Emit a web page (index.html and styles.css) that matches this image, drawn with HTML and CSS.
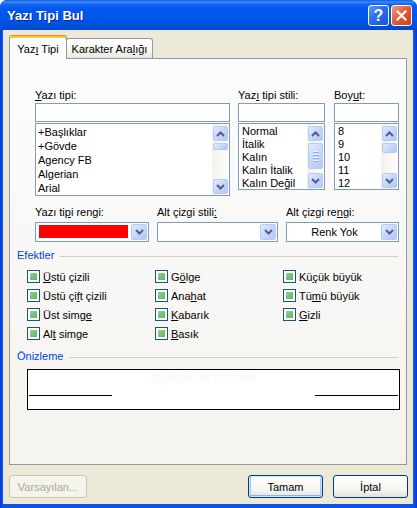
FILE: index.html
```html
<!DOCTYPE html>
<html lang="tr">
<head>
<meta charset="utf-8">
<title>Yazı Tipi Bul</title>
<link rel="stylesheet" href="styles.css">
</head>
<body>
<div class="window">
  <div class="titlebar">
    <span class="title">Yazı Tipi Bul</span>
    <div class="tb-buttons">
      <div class="tb-btn help">?</div>
      <div class="tb-btn close">
        <svg width="11" height="11" viewBox="0 0 11 11"><path d="M1.5 1.5 L9.5 9.5 M9.5 1.5 L1.5 9.5" stroke="#fff" stroke-width="2.2" stroke-linecap="square"/></svg>
      </div>
    </div>
  </div>
  <div class="client">
    <div class="tabs">
      <div class="tab active"><span>Yaz<u>ı</u> Tipi</span></div>
      <div class="tab inactive"><span>Karakter Ara<u>l</u>ığı</span></div>
    </div>
    <div class="panel">
      <div class="font-row">
        <div class="col col-font">
          <div class="lbl"><u>Y</u>azı tipi:</div>
          <div class="input"></div>
          <div class="list list-font">
            <div class="items">
              <div>+Başlıklar</div>
              <div>+Gövde</div>
              <div>Agency FB</div>
              <div>Algerian</div>
              <div>Arial</div>
            </div>
            <div class="vscroll">
              <div class="sb-btn"><svg width="9" height="6" viewBox="0 0 9 6"><path d="M1 5 L4.5 1.5 L8 5" fill="none" stroke="#4D6185" stroke-width="2"/></svg></div>
              <div class="sb-thumb thumb-font"></div>
              <div class="sb-track"></div>
              <div class="sb-btn"><svg width="9" height="6" viewBox="0 0 9 6"><path d="M1 1 L4.5 4.5 L8 1" fill="none" stroke="#4D6185" stroke-width="2"/></svg></div>
            </div>
          </div>
        </div>
        <div class="col col-style">
          <div class="lbl">Yaz<u>ı</u> tipi stili:</div>
          <div class="input"></div>
          <div class="list list-short">
            <div class="items">
              <div>Normal</div>
              <div>İtalik</div>
              <div>Kalın</div>
              <div>Kalın İtalik</div>
              <div>Kalın Değil</div>
            </div>
            <div class="vscroll">
              <div class="sb-btn"><svg width="9" height="6" viewBox="0 0 9 6"><path d="M1 5 L4.5 1.5 L8 5" fill="none" stroke="#4D6185" stroke-width="2"/></svg></div>
              <div class="sb-thumb thumb-style"><span></span><span></span><span></span><span></span></div>
              <div class="sb-track"></div>
              <div class="sb-btn"><svg width="9" height="6" viewBox="0 0 9 6"><path d="M1 1 L4.5 4.5 L8 1" fill="none" stroke="#4D6185" stroke-width="2"/></svg></div>
            </div>
          </div>
        </div>
        <div class="col col-size">
          <div class="lbl">Boy<u>u</u>t:</div>
          <div class="input"></div>
          <div class="list list-short">
            <div class="items">
              <div>8</div>
              <div>9</div>
              <div>10</div>
              <div>11</div>
              <div>12</div>
            </div>
            <div class="vscroll">
              <div class="sb-btn"><svg width="9" height="6" viewBox="0 0 9 6"><path d="M1 5 L4.5 1.5 L8 5" fill="none" stroke="#4D6185" stroke-width="2"/></svg></div>
              <div class="sb-thumb thumb-size"></div>
              <div class="sb-track"></div>
              <div class="sb-btn"><svg width="9" height="6" viewBox="0 0 9 6"><path d="M1 1 L4.5 4.5 L8 1" fill="none" stroke="#4D6185" stroke-width="2"/></svg></div>
            </div>
          </div>
        </div>
      </div>

      <div class="combo-row">
        <div class="ccol ccol-1">
          <div class="lbl lbl-combo">Yazı ti<u>p</u>i rengi:</div>
          <div class="combo">
            <div class="value"><div class="swatch"></div></div>
            <div class="dd-btn"><svg width="9" height="6" viewBox="0 0 9 6"><path d="M1 1 L4.5 4.5 L8 1" fill="none" stroke="#4D6185" stroke-width="2"/></svg></div>
          </div>
        </div>
        <div class="ccol ccol-2">
          <div class="lbl lbl-combo">Alt çizgi stili<u>:</u></div>
          <div class="combo">
            <div class="value"></div>
            <div class="dd-btn"><svg width="9" height="6" viewBox="0 0 9 6"><path d="M1 1 L4.5 4.5 L8 1" fill="none" stroke="#4D6185" stroke-width="2"/></svg></div>
          </div>
        </div>
        <div class="ccol ccol-3">
          <div class="lbl lbl-combo">Alt çizgi re<u>n</u>gi:</div>
          <div class="combo">
            <div class="value"><span>Renk Yok</span></div>
            <div class="dd-btn"><svg width="9" height="6" viewBox="0 0 9 6"><path d="M1 1 L4.5 4.5 L8 1" fill="none" stroke="#4D6185" stroke-width="2"/></svg></div>
          </div>
        </div>
      </div>

      <div class="group group-effects"><span>Efektler</span></div>
      <div class="effects">
        <div class="check"><span class="cb"></span><span><u>Ü</u>stü çizili</span></div>
        <div class="check"><span class="cb"></span><span>Üstü çi<u>f</u>t çizili</span></div>
        <div class="check"><span class="cb"></span><span>Üst simg<u>e</u></span></div>
        <div class="check"><span class="cb"></span><span>Al<u>t</u> simge</span></div>
        <div class="check"><span class="cb"></span><span>G<u>ö</u>lge</span></div>
        <div class="check"><span class="cb"></span><span>Ana<u>h</u>at</span></div>
        <div class="check"><span class="cb"></span><span><u>K</u>abarık</span></div>
        <div class="check"><span class="cb"></span><span><u>B</u>asık</span></div>
        <div class="check"><span class="cb"></span><span>Kü<u>ç</u>ük büyük</span></div>
        <div class="check"><span class="cb"></span><span>Tü<u>m</u>ü büyük</span></div>
        <div class="check"><span class="cb"></span><span><u>G</u>izli</span></div>
      </div>

      <div class="group group-preview"><span>Önizleme</span></div>
      <div class="preview">
        <div class="watermark">dijitalders.com</div>
        <div class="pv-lines"><span class="pv-line"></span><span class="pv-line"></span></div>
      </div>
    </div>

    <div class="buttons">
      <div class="btn btn-disabled"><span>Varsayılan...</span></div>
      <div class="btn btn-default"><span>Tamam</span></div>
      <div class="btn"><span>İptal</span></div>
    </div>
  </div>
</div>
</body>
</html>
```

FILE: styles.css
```css
* { box-sizing: border-box; }
html, body { margin: 0; padding: 0; }
body {
  width: 417px;
  height: 508px;
  overflow: hidden;
  background: #ffffff;
  font-family: "Liberation Sans", Arial, sans-serif;
  font-size: 11px;
  color: #000;
}
u { text-decoration: underline; text-underline-offset: 1px; }

.window {
  width: 417px;
  height: 508px;
  display: flex;
  flex-direction: column;
  background: linear-gradient(90deg, #0831D9 0px, #0855E8 2px, #0855E8 414px, #0831D9 417px);
  border-radius: 7px 7px 0 0;
  overflow: hidden;
}

.titlebar {
  height: 30px;
  flex: none;
  display: flex;
  align-items: center;
  padding: 0 5px 0 7px;
  background: linear-gradient(#0A5AE6 0px, #3F8CF3 2px, #1466F0 4px, #0058EE 9px, #0055E7 20px, #0050DD 26px, #0047C8 30px);
}
.title {
  flex: 1;
  color: #fff;
  font-weight: bold;
  font-size: 13px;
  padding-top: 1px;
  text-shadow: 1px 1px 0 #0A2680;
}
.tb-buttons { display: flex; gap: 2px; margin-top: 1px; }
.tb-btn {
  width: 21px;
  height: 21px;
  border: 1px solid #fff;
  border-radius: 3px;
  display: flex;
  align-items: center;
  justify-content: center;
  color: #fff;
  font-weight: bold;
  font-size: 16px;
  font-family: "Liberation Sans", Arial, sans-serif;
}
.help { background: linear-gradient(135deg, #5C9BFA 0%, #2A6CF0 45%, #1A54DA 100%); }
.close { background: linear-gradient(135deg, #F29A78 0%, #E2582F 50%, #C9411C 100%); }

.client {
  flex: 1;
  margin: 0 4px 4px 3px;
  background: #ECE9D8;
  display: flex;
  flex-direction: column;
  padding: 5px 6px 0 6px;
}

.tabs {
  height: 23px;
  display: flex;
  align-items: flex-end;
  position: relative;
  z-index: 1;
}
.tab {
  display: flex;
  align-items: center;
  justify-content: center;
  border: 1px solid #919B9C;
  border-bottom: none;
  border-radius: 3px 3px 0 0;
  white-space: nowrap;
}
.tab.active {
  width: 58px;
  height: 24px;
  margin-bottom: -1px;
  padding-top: 3px;
  background: #FCFCFE;
  border-top-color: #E68B2C;
  box-shadow: inset 0 2px 0 #FFC83C;
}
.tab.inactive {
  width: 87px;
  height: 20px;
  margin-left: -1px;
  background: linear-gradient(#FFFFFF, #F6F5F1 60%, #E8E6DE);
}

.panel {
  height: 407px;
  flex: none;
  border: 1px solid #919B9C;
  background: linear-gradient(#FCFCFE, #F4F3EE);
  display: flex;
  flex-direction: column;
}

.lbl { height: 13px; line-height: 13px; white-space: nowrap; margin-bottom: 1px; }

.font-row { display: flex; align-items: flex-start; margin: 30px 0 0 25px; }
.col-font { width: 195px; margin-right: 8px; }
.col-style { width: 87px; margin-right: 9px; }
.col-size { width: 65px; }

.input { height: 19px; border: 1px solid #7F9DB9; background: #fff; }
.list {
  margin-top: 1px;
  border: 1px solid #7F9DB9;
  background: #fff;
  display: flex;
}
.list-font { height: 73px; }
.list-short { height: 67px; }
.items { flex: 1; overflow: hidden; white-space: nowrap; }
.list-font .items { padding: 1px 0 0 2px; }
.list-font .items div { height: 14px; line-height: 14px; }
.list-short .items { padding: 1px 0 0 3px; }
.list-short .items div { height: 13px; line-height: 13px; }

.vscroll {
  width: 17px;
  display: flex;
  flex-direction: column;
  gap: 2px;
  padding: 2px 1px 1px 1px;
  background: linear-gradient(90deg, #F3F1EC, #FEFEFB);
}
.sb-btn, .sb-thumb, .dd-btn {
  border: 1px solid #B6CAF4;
  border-radius: 2px;
  background: linear-gradient(135deg, #E2EAFD 0%, #C7D7FB 50%, #B4C8F6 100%);
  display: flex;
  align-items: center;
  justify-content: center;
}
.sb-btn { height: 15px; flex: none; }
.sb-track { flex: 1; }
.thumb-font { height: 7px; flex: none; }
.thumb-size { height: 10px; flex: none; }
.thumb-style {
  height: 26px;
  flex: none;
  flex-direction: column;
  gap: 1px;
}
.thumb-style span { display: block; width: 6px; height: 1px; background: #EEF4FE; box-shadow: 0 1px 0 #8CB0F8; margin-bottom: 1px; }

.combo-row { display: flex; margin: 10px 0 0 25px; }
.ccol-1 { width: 114px; margin-right: 8px; }
.ccol-2 { width: 121px; margin-right: 8px; }
.ccol-3 { width: 113px; }
.lbl-combo { margin-bottom: 3px; }
.combo {
  height: 20px;
  border: 1px solid #7F9DB9;
  background: #fff;
  display: flex;
  align-items: center;
  padding: 1px;
}
.combo .value {
  flex: 1;
  height: 100%;
  display: flex;
  align-items: center;
  justify-content: center;
}
.swatch { flex: 1; height: 13px; margin: 0 3px 1px 2px; background: #FF0000; }
.dd-btn { width: 16px; height: 16px; flex: none; }

.group {
  display: flex;
  align-items: center;
  height: 13px;
  line-height: 13px;
  color: #0046D5;
  margin: 7px 0 0 7px;
}
.group::after {
  content: "";
  flex: 1;
  height: 1px;
  background: #D0D0BF;
  margin: 1px 8px 0 6px;
}

.effects {
  display: grid;
  grid-auto-flow: column;
  grid-template-rows: repeat(4, 19px);
  grid-template-columns: 128px 128px 1fr;
  margin: 5px 0 0 17px;
}
.check { display: flex; align-items: center; gap: 3px; white-space: nowrap; }
.cb {
  width: 13px;
  height: 13px;
  border: 1px solid #1C5180;
  background: #fff;
  padding: 2px;
  flex: none;
}
.cb::before {
  content: "";
  display: block;
  width: 7px;
  height: 7px;
  background: linear-gradient(135deg, #8FD48F, #5DB55D);
}

.group-preview { margin-top: 7px; }
.preview {
  width: 373px;
  height: 41px;
  margin: 6px 0 0 17px;
  border: 1px solid #000;
  background: #fff;
  display: flex;
  flex-direction: column;
}
.watermark {
  height: 14px;
  line-height: 14px;
  text-align: center;
  font-weight: bold;
  font-size: 15px;
  color: #FAFAFA;
  padding-right: 20px;
}
.pv-lines {
  display: flex;
  justify-content: space-between;
  padding: 0 1px;
  margin-top: 11px;
}
.pv-line { display: block; width: 83px; height: 1px; background: #000; }

.buttons {
  display: flex;
  margin: 10px -1px 0 0;
  gap: 10px;
}
.btn {
  width: 75px;
  height: 23px;
  border: 1px solid #003C74;
  border-radius: 3px;
  background: linear-gradient(#FFFFFF, #F4F4F0 70%, #E3E0D6);
  display: flex;
  align-items: center;
  justify-content: center;
  white-space: nowrap;
}
.btn-disabled {
  width: 78px;
  margin-right: auto;
  border-color: #C9C7BA;
  background: #F5F4EA;
  color: #ACA899;
}
.btn-default {
  box-shadow: inset 0 0 0 1px #CEE7FF, inset 0 -2px 0 #8AB0EE, inset 2px 0 0 #A6C4F5, inset -2px 0 0 #A6C4F5;
}
```
